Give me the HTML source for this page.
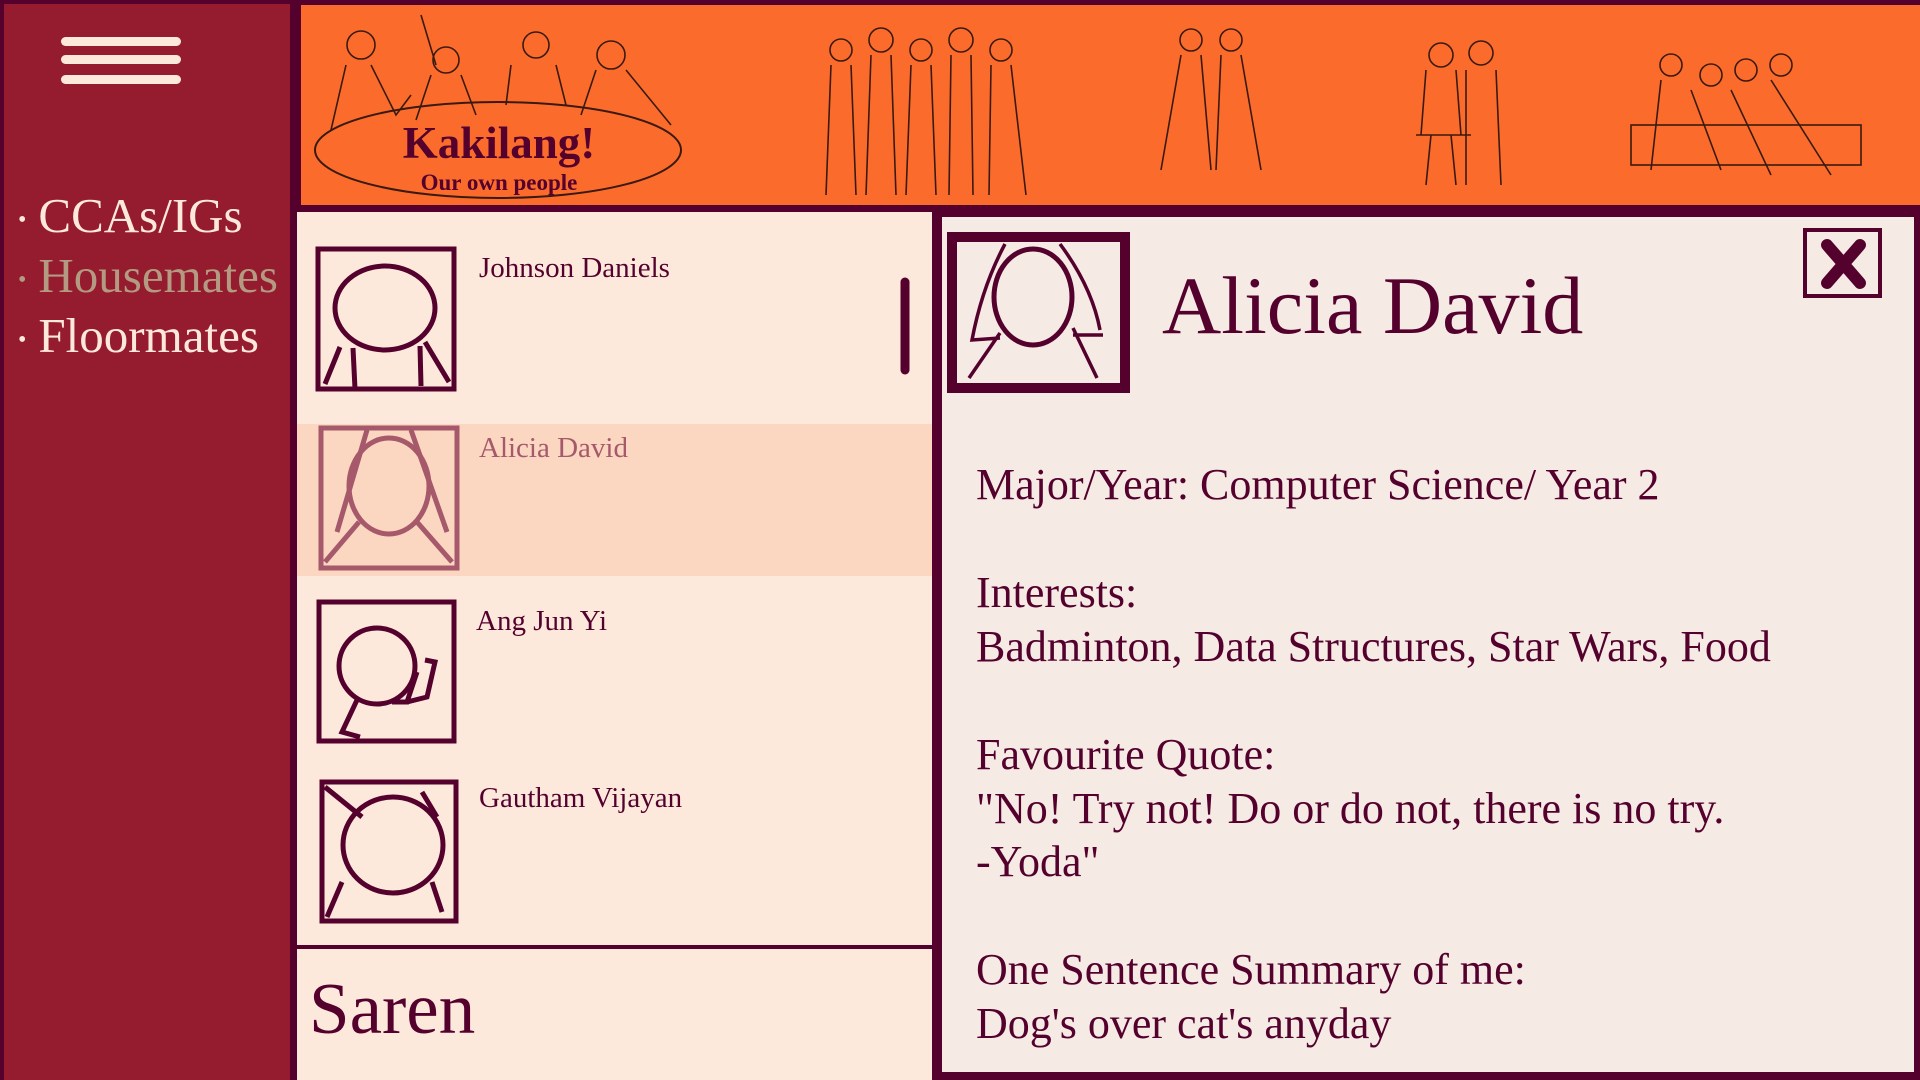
<!DOCTYPE html>
<html><head><meta charset="utf-8"><style>
*{margin:0;padding:0;box-sizing:border-box}
body{width:1920px;height:1080px;overflow:hidden;background:#55012e;font-family:"Liberation Serif",serif;position:relative}
.abs{position:absolute}
#side{left:4px;top:4px;width:286px;height:1076px;background:#951b2f}
.bar{position:absolute;left:57px;width:120px;height:9px;border-radius:5px;background:#fde9dc}
.nav{position:absolute;left:14px;font-size:49px;color:#fde9dc;white-space:nowrap}
.nav span{font-size:24px;vertical-align:middle;margin-right:12px}
#head{left:301px;top:5px;width:1619px;height:200px;background:#fb6c2c}
#list{left:297px;top:212px;width:635px;height:868px;background:#fde9dc}
#detail{left:942px;top:217px;width:972px;height:855px;background:#f5eae4}
.name{position:absolute;left:182px;font-size:29px;color:#55012e;white-space:nowrap}
.txt{position:absolute;left:34px;font-size:44px;color:#55012e;white-space:nowrap}
</style></head><body>
<div id="side" class="abs">
 <div class="bar" style="top:33px"></div>
 <div class="bar" style="top:51px"></div>
 <div class="bar" style="top:71px"></div>
 <div class="nav" style="top:183px"><span>•</span>CCAs/IGs</div>
 <div class="nav" style="top:243px;color:#b39a80"><span>•</span>Housemates</div>
 <div class="nav" style="top:303px"><span>•</span>Floormates</div>
</div>
<div id="head" class="abs">
<svg width="1619" height="200" fill="none" stroke="#3a1a10" stroke-width="2">
 <ellipse cx="197" cy="145" rx="183" ry="48"/>
 <g stroke-width="1.6">
 <circle cx="60" cy="40" r="14"/><path d="M45 60 L30 125 M70 60 L95 110 L110 90"/>
 <circle cx="145" cy="55" r="13"/><path d="M130 70 L115 115 M160 70 L175 110 M120 10 L135 60"/>
 <circle cx="235" cy="40" r="13"/><path d="M210 60 L205 100 M255 60 L265 100"/>
 <circle cx="310" cy="50" r="14"/><path d="M295 65 L280 110 M325 65 L370 120"/>
 <g transform="translate(520,10)"><circle cx="20" cy="35" r="11"/><circle cx="60" cy="25" r="12"/><circle cx="100" cy="35" r="11"/><circle cx="140" cy="25" r="12"/><circle cx="180" cy="35" r="11"/>
 <path d="M10 50 L5 180 M30 50 L35 180 M50 40 L45 180 M70 40 L75 180 M90 50 L85 180 M110 50 L115 180 M130 40 L128 180 M150 40 L152 180 M170 50 L168 180 M190 50 L205 180"/></g>
 <g transform="translate(860,15)"><circle cx="30" cy="20" r="11"/><circle cx="70" cy="20" r="11"/><path d="M20 35 L0 150 M40 35 L50 150 M60 35 L55 150 M80 35 L100 150"/></g>
 <g transform="translate(1110,30)"><circle cx="30" cy="20" r="12"/><circle cx="70" cy="18" r="12"/><path d="M15 35 L10 100 M45 35 L50 100 M55 35 L55 150 M85 35 L90 150 M5 100 L60 100 M20 100 L15 150 M40 100 L45 150"/></g>
 <g transform="translate(1330,45)"><circle cx="40" cy="15" r="11"/><circle cx="80" cy="25" r="11"/><circle cx="115" cy="20" r="11"/><circle cx="150" cy="15" r="11"/><rect x="0" y="75" width="230" height="40"/><path d="M30 30 L20 120 M60 40 L90 120 M100 40 L140 125 M140 30 L200 125"/></g>
 </g>
</svg>
 <div class="abs" style="left:0;width:396px;top:112px;text-align:center;font-size:45px;font-weight:bold;color:#55012e">Kakilang!</div>
 <div class="abs" style="left:0;width:396px;top:165px;text-align:center;font-size:23px;font-weight:bold;color:#55012e">Our own people</div>
</div>
<div id="list" class="abs">
 <div class="abs" style="left:0;top:212px;width:635px;height:152px;background:#fbd6c0"></div>
 <svg class="abs" style="left:0;top:0" width="635" height="868" fill="none" stroke="#55012e" stroke-width="5">
  <g><rect x="21" y="37" width="136" height="140"/><ellipse cx="88" cy="96" rx="50" ry="42"/><path d="M43 135 L28 172 M56 136 L58 177 M123 134 L124 174 M128 130 L152 170"/></g>
  <g stroke="#a5596a"><rect x="24" y="216" width="136" height="140"/><ellipse cx="92" cy="274" rx="40" ry="48"/><path d="M70 218 L40 320 M114 218 L150 320 M28 350 L62 310 M155 350 L120 310"/></g>
  <g><rect x="22" y="390" width="135" height="139"/><circle cx="80" cy="454" r="38"/><path d="M60 488 L45 520 L63 525 M95 490 L110 490 L120 460 M110 490 L130 485 L138 450 L128 448"/></g>
  <g><rect x="25" y="570" width="134" height="139"/><ellipse cx="96" cy="633" rx="50" ry="48"/><path d="M28 575 L65 605 M125 580 L140 605 M45 670 L30 705 M135 670 L145 700"/></g>
  <path d="M608 70 L608 158" stroke-width="9" stroke-linecap="round"/>
  <path d="M0 735 L635 735" stroke-width="4"/>
 </svg>
 <div class="name" style="top:40px">Johnson Daniels</div>
 <div class="name" style="top:220px;color:#a5596a">Alicia David</div>
 <div class="name" style="top:393px;left:179px">Ang Jun Yi</div>
 <div class="name" style="top:570px">Gautham Vijayan</div>
 <div class="abs" style="left:12px;top:755px;font-size:73px;color:#55012e">Saren</div>
</div>
<div id="detail" class="abs">
 <svg class="abs" style="left:0;top:0" width="972" height="200" fill="none" stroke="#55012e">
  <rect x="10" y="20" width="173" height="151" stroke-width="10"/>
  <ellipse cx="91" cy="80" rx="39" ry="48" stroke-width="5"/>
  <path d="M63 27 Q40 70 30 123 L58 121 M58 116 L27 161 M118 27 Q150 70 158 113 M131 118 L161 118 M131 111 L155 161" stroke-width="3.5"/>
  <rect x="863" y="13" width="75" height="66" stroke-width="4"/>
  <path d="M885 28 L918 66 M918 28 L885 66" stroke-width="12" stroke-linecap="round"/>
 </svg>
 <div class="abs" style="left:220px;top:42px;font-size:82px;color:#55012e;white-space:nowrap">Alicia David</div>
 <div class="txt" style="top:242px">Major/Year: Computer Science/ Year 2</div>
 <div class="txt" style="top:350px">Interests:</div>
 <div class="txt" style="top:404px">Badminton, Data Structures, Star Wars, Food</div>
 <div class="txt" style="top:512px">Favourite Quote:</div>
 <div class="txt" style="top:566px">"No! Try not! Do or do not, there is no try.</div>
 <div class="txt" style="top:619px">-Yoda"</div>
 <div class="txt" style="top:727px">One Sentence Summary of me:</div>
 <div class="txt" style="top:781px">Dog's over cat's anyday</div>
</div>
</body></html>
